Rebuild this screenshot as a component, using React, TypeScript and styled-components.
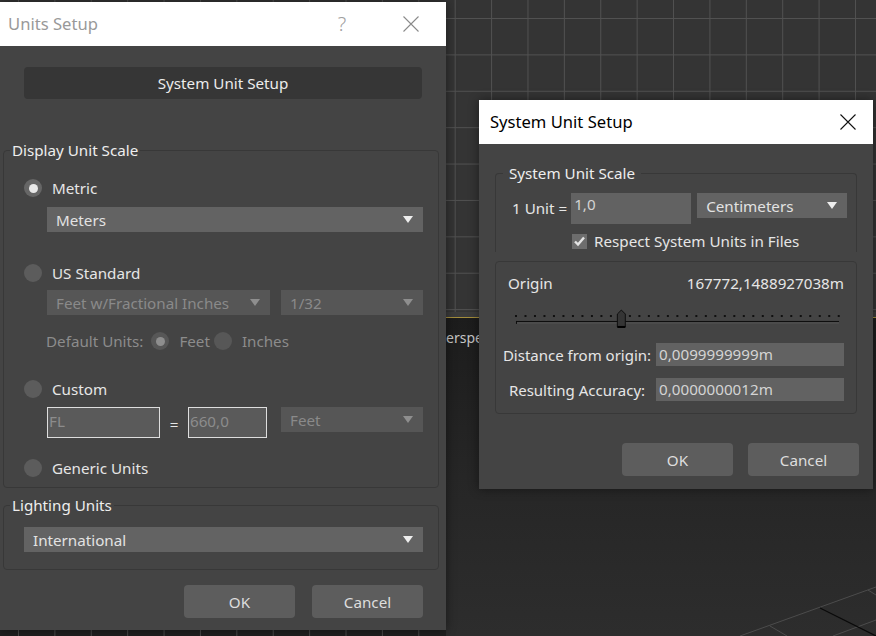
import styled, { createGlobalStyle, css } from "styled-components";

const GlobalStyle = createGlobalStyle`
  html, body {
    margin: 0;
    padding: 0;
    background: #2a2a2a;
  }
  body {
    font-family: "Noto Sans", "Open Sans", "DejaVu Sans", sans-serif;
    font-size: 15.2px;
  }
  * {
    box-sizing: border-box;
  }
`;

function CloseIcon({ color }: { color: string }) {
  return (
    <svg width="16" height="16" viewBox="0 0 16 16">
      <path d="M0.5 0.5 L15.5 15.5 M15.5 0.5 L0.5 15.5" stroke={color} strokeWidth="1.1" fill="none" />
    </svg>
  );
}

function Arrow({ color }: { color: string }) {
  return (
    <svg width="10" height="7" viewBox="0 0 10 7">
      <path d="M0 0 H10 L5 7 Z" fill={color} />
    </svg>
  );
}

function CheckMark() {
  return (
    <svg width="15" height="15" viewBox="0 0 15 15">
      <path d="M3 7.5 L6 10.5 L12 3.5" stroke="#e4e4e4" strokeWidth="2.4" fill="none" />
    </svg>
  );
}

function OriginSlider() {
  const dots = Array.from({ length: 35 }, (_, i) => 2 + i * 9.55);
  return (
    <svg width="332" height="24" viewBox="0 0 332 24">
      {dots.map((x) => (
        <rect key={x} x={x - 1} y="9" width="2" height="2" fill="#101010" />
      ))}
      <path d="M2 15.5 H327" stroke="#0d0d0d" strokeWidth="1" />
      <path d="M2 17 H327" stroke="#555555" strokeWidth="1" />
      <path d="M2.5 15 V18" stroke="#0d0d0d" strokeWidth="1" />
      <polygon points="104,8 108,4 112,8 112,21 104,21" fill="#353535" stroke="#0e0e0e" strokeWidth="1" />
      <path d="M104 21 H112" stroke="#000" strokeWidth="2" />
    </svg>
  );
}

function PerspectiveGrid() {
  return (
    <GridDrawing width="140" height="60" viewBox="0 0 140 60">
      <path d="M4 60 L140 11 M34 50 L51 60 M97 60 L140 44 M132 14 L140 19" stroke="#4c4c4c" strokeWidth="1" />
      <path d="M84 32 L140 60" stroke="#0a0a0a" strokeWidth="1.2" />
    </GridDrawing>
  );
}

function Dropdown({ label, disabled, width }: { label: string; disabled?: boolean; width?: number }) {
  return (
    <DropBox $disabled={disabled} $w={width}>
      <span>{label}</span>
      <Arrow color={disabled ? "#8e8e8e" : "#eeeeee"} />
    </DropBox>
  );
}

export default function App() {
  return (
    <>
      <GlobalStyle />
      <Screen>
        <TopViewport />
        <ViewportEdge />
        <ActiveLine />
        <BottomViewport>
          <ViewLabel>[Perspective]</ViewLabel>
          <PerspectiveGrid />
          <TickStrip />
        </BottomViewport>

        <Window $x={0} $y={2} $w={446} $h={628}>
          <TitleBar $padRight={12} $padLeft={8}>
            <Title $active={false}>Units Setup</Title>
            <TitleButtons>
              <HelpGlyph>?</HelpGlyph>
              <TitleButton>
                <CloseIcon color="#8a8a8a" />
              </TitleButton>
            </TitleButtons>
          </TitleBar>
          <Body $pad="0 7px 0 3px">
            <DarkButton>System Unit Setup</DarkButton>

            <Group $mt={41}>
              <Legend $indent={6} $gap={2}>Display Unit Scale</Legend>
              <GroupBody $pad="0 15px 9px 20px">
                <RadioRow $mt={18}>
                  <Radio $checked />
                  <span>Metric</span>
                </RadioRow>
                <Indented $mt={9}>
                  <Dropdown label="Meters" />
                </Indented>

                <RadioRow $mt={31}>
                  <Radio />
                  <span>US Standard</span>
                </RadioRow>
                <IndentedRow $mt={7} $gap={11}>
                  <Dropdown label="Feet w/Fractional Inches" disabled width={223} />
                  <Dropdown label="1/32" disabled />
                </IndentedRow>
                <DefaultUnits $mt={16}>
                  <DimLabel>Default Units:</DimLabel>
                  <Radio $checked $disabled />
                  <DimLabel>Feet</DimLabel>
                  <Radio $disabled />
                  <DimLabel>Inches</DimLabel>
                </DefaultUnits>

                <RadioRow $mt={28}>
                  <Radio />
                  <span>Custom</span>
                </RadioRow>
                <CustomRow $mt={8}>
                  <FramedInput $w={113}>FL</FramedInput>
                  <Equals>=</Equals>
                  <FramedInput $w={79}>660,0</FramedInput>
                  <Spacer />
                  <Dropdown label="Feet" disabled width={142} />
                </CustomRow>

                <RadioRow $mt={20}>
                  <Radio />
                  <span>Generic Units</span>
                </RadioRow>
              </GroupBody>
            </Group>

            <Group $mt={7}>
              <Legend $indent={6} $gap={2}>Lighting Units</Legend>
              <GroupBody $pad="12px 15px 17px 20px">
                <Dropdown label="International" />
              </GroupBody>
            </Group>

            <ButtonRow $mt={15} $mr={16} $gap={17}>
              <PlainButton>OK</PlainButton>
              <PlainButton>Cancel</PlainButton>
            </ButtonRow>
          </Body>
        </Window>

        <Window $x={479} $y={100} $w={394} $h={389}>
          <TitleBar $padRight={2} $padLeft={11}>
            <Title $active>System Unit Setup</Title>
            <TitleButtons>
              <TitleButton>
                <CloseIcon color="#111111" />
              </TitleButton>
            </TitleButtons>
          </TitleBar>
          <Body $pad="0 16px">
            <Group $mt={19} $openBottom>
              <Legend $indent={7} $gap={6}>System Unit Scale</Legend>
              <GroupBody $pad="0 0 2px 0">
                <UnitRow $mt={10}>
                  <span>1 Unit =</span>
                  <ValueBox $w={120} $h={31}>1,0</ValueBox>
                  <Dropdown label="Centimeters" width={150} />
                </UnitRow>
                <CheckRow $mt={8}>
                  <CheckBox>
                    <CheckMark />
                  </CheckBox>
                  <span>Respect System Units in Files</span>
                </CheckRow>
              </GroupBody>
            </Group>

            <Group $mt={9}>
              <GroupBody $pad="0 12px 12px 12px">
                <OriginRow $mt={11}>
                  <span>Origin</span>
                  <span>167772,1488927038m</span>
                </OriginRow>
                <SliderWrap $mt={13}>
                  <OriginSlider />
                </SliderWrap>
                <FieldRow $mt={13}>
                  <FieldLabel>Distance from origin:</FieldLabel>
                  <ValueBox $h={23}>0,0099999999m</ValueBox>
                </FieldRow>
                <FieldRow $mt={12}>
                  <FieldLabel>Resulting Accuracy:</FieldLabel>
                  <ValueBox $h={23}>0,0000000012m</ValueBox>
                </FieldRow>
              </GroupBody>
            </Group>

            <ButtonRow $mt={29} $mr={-2} $gap={15}>
              <PlainButton>OK</PlainButton>
              <PlainButton>Cancel</PlainButton>
            </ButtonRow>
          </Body>
        </Window>
      </Screen>
    </>
  );
}

const Screen = styled.div`
  position: relative;
  width: 876px;
  height: 636px;
  overflow: hidden;
  display: flex;
  flex-direction: column;
  background: #2b2b2b;
`;

const TopViewport = styled.div`
  flex: none;
  height: 312px;
  background-color: #343434;
  background-image: linear-gradient(to right, #515151 1px, transparent 1px),
    linear-gradient(to bottom, #515151 1px, transparent 1px);
  background-size: 36.4px 36.4px;
  background-position: 18px 18px;
`;

const ViewportEdge = styled.div`
  flex: none;
  height: 5px;
  background: #3b3b3b;
`;

const ActiveLine = styled.div`
  flex: none;
  height: 1px;
  background: #a38d3c;
`;

const BottomViewport = styled.div`
  position: relative;
  flex: 1;
  display: flex;
  flex-direction: column;
  background: linear-gradient(to bottom, #1c1c1c 0%, #262626 50%, #2d2d2d 100%);
`;

const ViewLabel = styled.div`
  flex: 1;
  padding: 13px 0 0 433px;
  font-size: 14px;
  line-height: 13px;
  color: #c6c6c6;
  white-space: nowrap;
`;

const GridDrawing = styled.svg`
  position: absolute;
  right: 0;
  bottom: 0;
`;

const TickStrip = styled.div`
  flex: none;
  width: 446px;
  height: 6px;
  background-color: #202020;
  background-image: linear-gradient(to right, #4a4a4a 1px, transparent 1px);
  background-size: 36.4px 6px;
  background-position: 18px 0;
`;

const Window = styled.section<{ $x: number; $y: number; $w: number; $h: number }>`
  position: absolute;
  left: ${(p) => p.$x}px;
  top: ${(p) => p.$y}px;
  width: ${(p) => p.$w}px;
  height: ${(p) => p.$h}px;
  display: flex;
  flex-direction: column;
  background: #444444;
  color: #e6e6e6;
  box-shadow: 0 0 10px rgba(0, 0, 0, 0.45);
`;

const TitleBar = styled.header<{ $padRight: number; $padLeft: number }>`
  flex: none;
  height: 44px;
  display: flex;
  align-items: center;
  justify-content: space-between;
  padding: 0 ${(p) => p.$padRight}px 0 ${(p) => p.$padLeft}px;
  background: #ffffff;
`;

const Title = styled.span<{ $active: boolean }>`
  font-size: 16.6px;
  line-height: 24px;
  color: ${(p) => (p.$active ? "#000000" : "#999999")};
`;

const TitleButtons = styled.div`
  display: flex;
  align-items: center;
  height: 100%;
  gap: 23px;
`;

const TitleButton = styled.div`
  width: 46px;
  height: 100%;
  display: flex;
  align-items: center;
  justify-content: center;
`;

const HelpGlyph = styled(TitleButton)`
  font-size: 20px;
  font-weight: 300;
  color: #a0a0a0;
  padding-bottom: 2px;
`;

const Body = styled.div<{ $pad: string }>`
  flex: 1;
  display: flex;
  flex-direction: column;
  padding: ${(p) => p.$pad};
  & > * {
    flex-shrink: 0;
  }
`;

const DarkButton = styled.div`
  margin: 21px 17px 0 21px;
  height: 32px;
  display: flex;
  align-items: center;
  justify-content: center;
  background: #363636;
  border-radius: 4px;
  color: #ececec;
`;

const Group = styled.fieldset<{ $mt: number; $openBottom?: boolean }>`
  margin: ${(p) => p.$mt}px 0 0;
  padding: 0;
  min-width: 0;
  border: 1px solid #383838;
  border-radius: 4px;
  ${(p) =>
    p.$openBottom &&
    css`
      border-bottom: none;
      border-radius: 4px 4px 0 0;
    `}
`;

const Legend = styled.legend<{ $indent: number; $gap: number }>`
  margin-left: ${(p) => p.$indent}px;
  padding: 0 ${(p) => p.$gap}px;
  line-height: 20px;
  color: #eeeeee;
`;

const GroupBody = styled.div<{ $pad: string }>`
  display: flex;
  flex-direction: column;
  padding: ${(p) => p.$pad};
  & > * {
    flex-shrink: 0;
  }
`;

const RadioRow = styled.div<{ $mt: number }>`
  display: flex;
  align-items: center;
  gap: 10px;
  height: 20px;
  margin-top: ${(p) => p.$mt}px;
  line-height: 20px;
`;

const Radio = styled.span<{ $checked?: boolean; $disabled?: boolean }>`
  flex: none;
  width: 18px;
  height: 18px;
  border-radius: 50%;
  display: inline-flex;
  align-items: center;
  justify-content: center;
  background: ${(p) => (p.$disabled ? "#575757" : p.$checked ? "#666666" : "#5c5c5c")};
  &::after {
    content: "";
    display: ${(p) => (p.$checked ? "block" : "none")};
    width: 9px;
    height: 9px;
    border-radius: 50%;
    background: ${(p) => (p.$disabled ? "#8e8e8e" : "#e8e8e8")};
  }
`;

const Indented = styled.div<{ $mt: number }>`
  display: flex;
  flex-direction: column;
  margin: ${(p) => p.$mt}px 0 0 23px;
`;

const IndentedRow = styled.div<{ $mt: number; $gap: number }>`
  display: flex;
  gap: ${(p) => p.$gap}px;
  margin: ${(p) => p.$mt}px 0 0 23px;
`;

const DropBox = styled.div<{ $disabled?: boolean; $w?: number }>`
  flex: ${(p) => (p.$w ? "none" : "1 0 auto")};
  width: ${(p) => (p.$w ? `${p.$w}px` : "auto")};
  height: 25px;
  display: flex;
  align-items: center;
  justify-content: space-between;
  padding: 0 10px 0 9px;
  background: ${(p) => (p.$disabled ? "#565656" : "#636363")};
  color: ${(p) => (p.$disabled ? "#8a8a8a" : "#e2e2e2")};
  line-height: 20px;
  white-space: nowrap;
`;

const DefaultUnits = styled.div<{ $mt: number }>`
  display: flex;
  align-items: center;
  height: 20px;
  margin: ${(p) => p.$mt}px 0 0 22px;
  line-height: 20px;
  ${Radio} {
    margin: 0 10px 0 8px;
  }
  ${Radio} + span + ${Radio} {
    margin-left: 4px;
  }
`;

const DimLabel = styled.span`
  color: #8c8c8c;
`;

const CustomRow = styled.div<{ $mt: number }>`
  display: flex;
  align-items: flex-start;
  margin: ${(p) => p.$mt}px 0 0 23px;
`;

const FramedInput = styled.div<{ $w: number }>`
  flex: none;
  width: ${(p) => p.$w}px;
  height: 31px;
  padding: 3px 0 0 1px;
  border: 1px solid #dedede;
  background: #5a5a5a;
  color: #8c8c8c;
  line-height: 20px;
`;

const Equals = styled.span`
  flex: none;
  width: 28px;
  height: 31px;
  display: flex;
  align-items: center;
  justify-content: center;
  color: #e6e6e6;
  padding-top: 2px;
`;

const Spacer = styled.div`
  flex: 1;
`;

const ButtonRow = styled.div<{ $mt: number; $mr: number; $gap: number }>`
  display: flex;
  justify-content: flex-end;
  gap: ${(p) => p.$gap}px;
  margin: ${(p) => p.$mt}px ${(p) => p.$mr}px 0 0;
`;

const PlainButton = styled.div`
  width: 111px;
  height: 33px;
  display: flex;
  align-items: center;
  justify-content: center;
  background: #5d5d5d;
  border-radius: 4px;
  color: #dedede;
`;

const UnitRow = styled.div<{ $mt: number }>`
  display: flex;
  align-items: flex-start;
  margin: ${(p) => p.$mt}px 0 0 16px;
  line-height: 20px;
  & > span {
    height: 29px;
    display: flex;
    align-items: center;
    margin-right: 4px;
  }
  ${DropBox} {
    margin-left: 6px;
  }
`;

const ValueBox = styled.div<{ $w?: number; $h: number }>`
  flex: ${(p) => (p.$w ? "none" : "1")};
  width: ${(p) => (p.$w ? `${p.$w}px` : "auto")};
  height: ${(p) => p.$h}px;
  padding: 1px 0 0 3px;
  background: #626262;
  color: #d4d4d4;
  line-height: 20px;
`;

const CheckRow = styled.div<{ $mt: number }>`
  display: flex;
  align-items: center;
  gap: 7px;
  height: 18px;
  margin: ${(p) => p.$mt}px 0 0 76px;
  line-height: 20px;
`;

const CheckBox = styled.span`
  flex: none;
  width: 15px;
  height: 15px;
  display: flex;
  background: #6d6d6d;
`;

const OriginRow = styled.div<{ $mt: number }>`
  display: flex;
  justify-content: space-between;
  height: 20px;
  line-height: 20px;
  margin-top: ${(p) => p.$mt}px;
`;

const SliderWrap = styled.div<{ $mt: number }>`
  display: flex;
  height: 24px;
  margin: ${(p) => p.$mt}px 0 0 6px;
`;

const FieldRow = styled.div<{ $mt: number }>`
  display: flex;
  align-items: center;
  gap: 4px;
  margin: ${(p) => p.$mt}px 0 0 -6px;
  line-height: 20px;
`;

const FieldLabel = styled.span`
  flex: none;
  width: 150px;
  text-align: center;
  white-space: nowrap;
  font-size: 15px;
`;
